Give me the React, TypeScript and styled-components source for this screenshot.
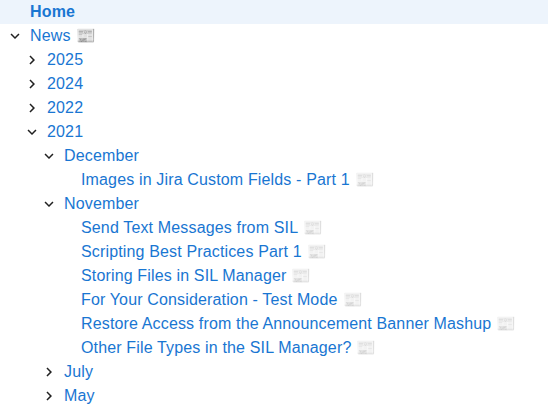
import React from "react";
import styled, { createGlobalStyle } from "styled-components";

const GlobalStyle = createGlobalStyle`
  body { margin: 0; background: #fff; overflow: hidden; }
`;
const Tree = styled.ul`
  margin: 0; padding: 0; list-style: none; height: 408px; overflow: hidden;
  font: 16px/24px "Liberation Sans", Arial, sans-serif; letter-spacing: 0.15008px;
`;
const Row = styled.li<{ $level: number; $active?: boolean }>`
  display: flex; align-items: center; height: 24px; box-sizing: border-box;
  padding-left: ${p => p.$level * 17 + 6}px;
  background: ${p => (p.$active ? "#edf4fc" : "transparent")};
  font-weight: ${p => (p.$active ? 700 : 400)};
`;
const IconSlot = styled.span`
  display: flex; flex: none; width: 18px; height: 24px; margin-right: 6px; align-items: center;
`;
const Label = styled.a`
  color: #1976d2; white-space: pre;
`;
const Paper = styled.span<{ $faded: boolean }>`
  margin-left: 0.4px;
  opacity: ${p => (p.$faded ? 0.4 : 1)};
`;

type Item = { text: string; level: number; state?: "open" | "closed"; active?: boolean; news?: "full" | "faded" };
const items: Item[] = [
  { text: "Home", level: 0, active: true },
  { text: "News", level: 0, state: "open", news: "full" },
  { text: "2025", level: 1, state: "closed" },
  { text: "2024", level: 1, state: "closed" },
  { text: "2022", level: 1, state: "closed" },
  { text: "2021", level: 1, state: "open" },
  { text: "December", level: 2, state: "open" },
  { text: "Images in Jira Custom Fields - Part 1", level: 3, news: "faded" },
  { text: "November", level: 2, state: "open" },
  { text: "Send Text Messages from SIL", level: 3, news: "faded" },
  { text: "Scripting Best Practices Part 1", level: 3, news: "faded" },
  { text: "Storing Files in SIL Manager", level: 3, news: "faded" },
  { text: "For Your Consideration - Test Mode", level: 3, news: "faded" },
  { text: "Restore Access from the Announcement Banner Mashup", level: 3, news: "faded" },
  { text: "Other File Types in the SIL Manager?", level: 3, news: "faded" },
  { text: "July", level: 2, state: "closed" },
  { text: "May", level: 2, state: "closed" },
];

const Chevron = ({ open }: { open: boolean }) => (
  <svg width="18" height="18" viewBox="0 0 24 24" fill="rgba(0,0,0,0.87)">
    <path d={open
      ? "M16.59 8.59 12 13.17 7.41 8.59 6 10l6 6 6-6z"
      : "M10 6 8.59 7.41 13.17 12l-4.58 4.59L10 18l6-6z"} />
  </svg>
);

export default function App() {
  return (
    <>
      <GlobalStyle />
      <Tree>
        {items.map(i => (
          <Row key={i.text} $level={i.level} $active={i.active}>
            <IconSlot>{i.state && <Chevron open={i.state === "open"} />}</IconSlot>
            <Label>{i.text}{i.news && <Paper $faded={i.news === "faded"}> 📰</Paper>}</Label>
          </Row>
        ))}
      </Tree>
    </>
  );
}
